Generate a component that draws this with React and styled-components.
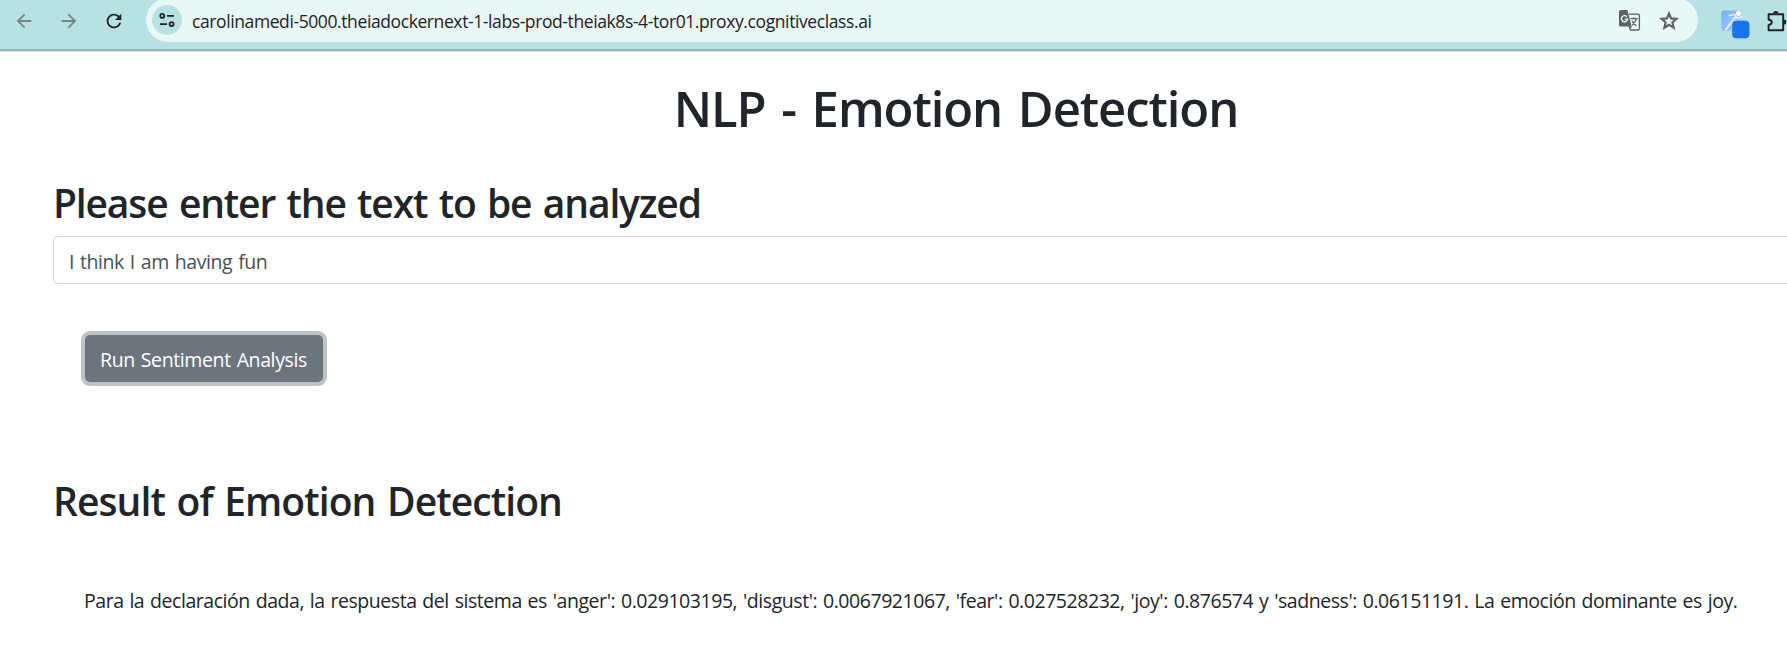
import React from "react";
import styled, { createGlobalStyle } from "styled-components";
import { MdArrowBack, MdArrowForward, MdRefresh } from "react-icons/md";

const GlobalStyle = createGlobalStyle`
  *, *::before, *::after { box-sizing: border-box; }
  body {
    margin: 0;
    background: #fff;
    color: #212529;
    font-family: "Open Sans", "Noto Sans", sans-serif;
    font-size: 19.5px;
    line-height: 30px;
    word-spacing: 1.2px;
  }
`;

const Window = styled.div`
  width: 100%;
  height: 645px;
  overflow: hidden;
`;

const Toolbar = styled.header`
  display: flex;
  align-items: center;
  height: 52px;
  padding: 0 0 8px 13px;
  background: #b8e1e4;
  border-bottom: 1px solid #d5e2e2;
  box-shadow: inset 0 -2px 0 #94b5b7;
  overflow: hidden;
`;

const NavButton = styled.span`
  display: flex;
  flex: none;
  width: 22px;
  height: 22px;
  margin: 0 23px 2px 0;
  color: ${(p) => (p.$disabled ? "#708789" : "#1f2223")};
  svg { width: 22px; height: 22px; }
`;

const AddressBar = styled.div`
  display: flex;
  align-items: center;
  flex: none;
  width: 1552px;
  height: 44px;
  margin: -3px 23px 0 -2px;
  padding: 0 17px 0 6px;
  border-radius: 22px;
  background: #eaf7f7;
`;

const SiteInfo = styled.span`
  display: flex;
  align-items: center;
  justify-content: center;
  width: 30px;
  height: 30px;
  margin-right: 10px;
  border-radius: 50%;
  background: #b8e1e4;
`;

const Url = styled.span`
  flex: 1;
  padding-top: 2px;
  font-size: 17.5px;
  line-height: 24px;
  letter-spacing: -0.4px;
  color: #1f2224;
  white-space: nowrap;
`;

const BarAction = styled.span`
  display: flex;
  margin-left: 16px;
  padding-top: 1px;
  color: #5b6365;
  svg { width: ${(p) => p.$size}px; height: ${(p) => p.$size}px; }
`;

const Extension = styled.span`
  display: flex;
  flex: none;
  margin-right: 16px;
  padding-top: 6px;
`;

const Page = styled.main`
  width: 1912px;
  padding: 25px 53px 0;
`;

const Title = styled.h1`
  margin: 0 0 40px;
  font-size: 49px;
  line-height: 62px;
  font-weight: 600;
  letter-spacing: -1.08px;
  word-spacing: 4px;
  text-align: center;
`;

const Heading = styled.h2`
  margin: 0 0 9px;
  font-size: 39px;
  line-height: 48px;
  font-weight: 600;
  letter-spacing: ${(p) => p.$tracking};
  word-spacing: 2.4px;
`;

const TextInput = styled.input`
  display: block;
  width: 100%;
  height: 48px;
  padding: 9px 15px 6px;
  border: 1px solid #ced4da;
  border-radius: 5px;
  background: #fff;
  color: #495057;
  font: inherit;
  letter-spacing: -0.4px;
  word-spacing: 1.2px;
  outline: none;
`;

const RunButton = styled.button`
  display: block;
  width: 238px;
  height: 47px;
  margin: 51px 0 95px 32px;
  padding: 2px 1px 0 0;
  border: 0;
  border-radius: 5px;
  background: #6c757d;
  box-shadow: 0 0 0 4px #bfc3c8;
  color: #fff;
  font: inherit;
  letter-spacing: -0.38px;
  word-spacing: 1.2px;
  white-space: nowrap;
`;

const Result = styled.p`
  margin: 61px 0 0 31px;
  letter-spacing: -0.45px;
  white-space: nowrap;
`;

const Puzzle = styled.svg`
  flex: none;
  width: 24px;
  height: 24px;
  margin-bottom: 2px;
`;

const TuneIcon = () => (
  <svg width="16" height="14" viewBox="0 0 16 14" fill="none" stroke="#202425" strokeWidth="1.8">
    <circle cx="3.2" cy="2.9" r="2" />
    <path d="M8 2.9h7M1 11.1h7" />
    <circle cx="12.6" cy="11.1" r="2" />
  </svg>
);

const TranslateIcon = () => (
  <svg viewBox="0 0 23 23" fill="none">
    <path d="M11 5.2h8.8a1.6 1.6 0 0 1 1.6 1.6v12.6a1.6 1.6 0 0 1-1.6 1.6h-7.8" stroke="currentColor" strokeWidth="1.3" />
    <path d="M2.6 1h6.8l4.2 16.6h-11a1.6 1.6 0 0 1-1.6-1.6v-13.4a1.6 1.6 0 0 1 1.6-1.6z" fill="currentColor" />
    <path d="M10.5 17.6h3.6l-2.5 3.7z" fill="currentColor" />
    <path d="M8.9 7.7a3.1 3.1 0 1 0 .7 2.4h-2.9" stroke="#eaf7f7" strokeWidth="1.4" />
    <path d="M12.3 9.7h7.4M15.7 8.2v1.5M18.3 9.9c-.7 2.7-2.3 4.6-4.3 6.3M13.9 11.7c1 2 2.7 4 4.6 5.3" stroke="currentColor" strokeWidth="1.3" />
  </svg>
);

const StarIcon = () => (
  <svg viewBox="0 0 24 24" fill="none" stroke="currentColor" strokeWidth="2.1">
    <path d="M12 4.4l2.1 5 5.4.5-4.1 3.500 1.300 5.300-4.700-2.850-4.700 2.850 1.300-5.300-4.100-3.500 5.400-.5z" />
  </svg>
);

const ExtensionIcon = () => (
  <svg width="29" height="29" viewBox="0 0 29 29">
    <defs>
      <linearGradient id="tile" x1="0" y1="0" x2="1" y2="1">
        <stop offset="0" stopColor="#72b0f5" />
        <stop offset="1" stopColor="#a9cffa" />
      </linearGradient>
    </defs>
    <rect x="0.3" y="0.5" width="20" height="20.5" rx="3" fill="url(#tile)" />
    <g stroke="#eef7ff" strokeLinecap="round" fill="none">
      <circle cx="17.5" cy="3.3" r="2.6" fill="#fff" stroke="none" />
      <path d="M8 5.6 13.5 4.4 16 8" strokeWidth="1.3" />
      <path d="M15 6.5 10 12.8 4.8 19.6" strokeWidth="1.7" />
      <path d="M15.5 7.5 18 8.2 20.5 6.8" strokeWidth="1.6" />
    </g>
    <rect x="10.8" y="10.3" width="18" height="18.2" rx="4.5" fill="#a8d3ee" />
    <rect x="11.2" y="10.8" width="17.2" height="17.4" rx="4" fill="#1b73e8" />
  </svg>
);

const PuzzleIcon = () => (
  <Puzzle viewBox="0 0 24 24">
    <path
      d="M2.6 5.2h14.6v16h-14.6v-5.3c2.3-.4 3.2-1.3 3.2-2.7s-.9-2.3-3.2-2.7z"
      fill="none"
      stroke="#1f2425"
      strokeWidth="1.9"
      strokeLinejoin="round"
    />
    <path d="M7.2 4.6a2.7 2.7 0 0 1 5.4 0zM17.6 10.4a2.7 2.7 0 0 1 0 5.4z" fill="#1f2425" />
  </Puzzle>
);

export default function App() {
  return (
    <Window>
      <GlobalStyle />
      <Toolbar>
        <NavButton $disabled><MdArrowBack /></NavButton>
        <NavButton $disabled><MdArrowForward /></NavButton>
        <NavButton><MdRefresh /></NavButton>
        <AddressBar>
          <SiteInfo><TuneIcon /></SiteInfo>
          <Url>carolinamedi-5000.theiadockernext-1-labs-prod-theiak8s-4-tor01.proxy.cognitiveclass.ai</Url>
          <BarAction $size={23}><TranslateIcon /></BarAction>
          <BarAction $size={24}><StarIcon /></BarAction>
        </AddressBar>
        <Extension><ExtensionIcon /></Extension>
        <PuzzleIcon />
      </Toolbar>
      <Page>
        <Title>NLP - Emotion Detection</Title>
        <Heading $tracking="-1.15px">Please enter the text to be analyzed</Heading>
        <TextInput type="text" defaultValue="I think I am having fun" />
        <RunButton type="button">Run Sentiment Analysis</RunButton>
        <Heading $tracking="-0.92px">Result of Emotion Detection</Heading>
        <Result>
          Para la declaración dada, la respuesta del sistema es 'anger': 0.029103195, 'disgust': 0.0067921067, 'fear': 0.027528232, 'joy': 0.876574 y 'sadness': 0.06151191. La emoción dominante es joy.
        </Result>
      </Page>
    </Window>
  );
}
